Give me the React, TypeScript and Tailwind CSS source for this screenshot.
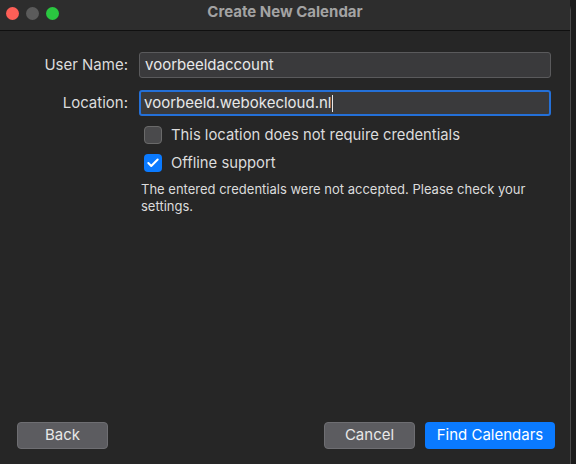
import { Check } from 'lucide-react'

const font = { fontFamily: 'Inter, "Noto Sans", sans-serif' }

function Field({ label, value, focused }: { label: string; value: string; focused?: boolean }) {
  return (
    <div className="flex items-center">
      <div className="w-[129px] pr-[1px] text-right text-[15px] text-[#dcdcdc]">{label}</div>
      <div
        className={
          focused
            ? 'ml-[10px] flex h-[26px] w-[412px] items-center rounded-[3px] border-[2.5px] border-[#2470d8] bg-[#3a3a3c] px-[3px] text-[15px] text-[#e8e8e8]'
            : 'ml-[10px] flex h-[26px] w-[412px] items-center rounded-[3px] border border-[#5a5a5c] bg-[#3a3a3c] px-[5px] text-[15px] text-[#e8e8e8]'
        }
      >
        {value}
        {focused && <span className="ml-[1px] h-[17px] w-[1px] bg-[#e8e8e8]" />}
      </div>
    </div>
  )
}

export default function App() {
  return (
    <div className="h-[464px] w-[576px] overflow-hidden bg-[#1c1c1c]" style={font}>
      <div className="flex h-[464px] w-[571px] flex-col rounded-tr-[10px] border-r border-[#4a4a4a] bg-[#262626]">
        {/* title bar */}
        <div className="relative flex h-[31px] shrink-0 items-center justify-center border-b border-[#101010] bg-[#2d2d2d]">
          <div className="absolute left-[6px] top-[7px] flex gap-[7px]">
            <span className="h-[13px] w-[13px] rounded-full bg-[#fd5f57]" />
            <span className="h-[13px] w-[13px] rounded-full bg-[#5b5b5b]" />
            <span className="h-[13px] w-[13px] rounded-full bg-[#2ac740]" />
          </div>
          <span className="-mt-[5px] text-[15px] font-bold text-[#a3a3a3]">Create New Calendar</span>
        </div>

        {/* form */}
        <div className="flex flex-1 flex-col pt-[21px]">
          <div className="flex flex-col gap-[12px]">
            <Field label="User Name:" value="voorbeeldaccount" />
            <Field label="Location:" value="voorbeeld.webokecloud.nl" focused />
          </div>

          <div className="ml-[144px] mt-[10px] flex flex-col gap-[10px] text-[14.8px] leading-[18px] text-[#dcdcdc]">
            <label className="flex items-center gap-[9px]">
              <span className="h-[18px] w-[18px] rounded-[4px] border border-[#6a6a6a] bg-[#4a4a4c]" />
              This location does not require credentials
            </label>
            <label className="flex items-center gap-[9px]">
              <span className="flex h-[18px] w-[18px] items-center justify-center rounded-[4px] bg-[#0a7aff]">
                <Check size={14} strokeWidth={3.5} color="#ffffff" />
              </span>
              Offline support
            </label>
          </div>

          <p className="ml-[141px] mt-[9px] w-[420px] text-[13px] leading-[17px] text-[#dcdcdc]">
            The entered credentials were not accepted. Please check your settings.
          </p>
        </div>

        {/* footer buttons */}
        <div className="flex items-center px-[17px] pb-[15px]">
          <button className="h-[27px] w-[91px] rounded-[4px] border border-[#6e6e72] bg-[#5c5c60] text-[15px] text-[#e8e8e8]">
            Back
          </button>
          <div className="flex-1" />
          <button className="h-[27px] w-[91px] rounded-[4px] border border-[#6e6e72] bg-[#5c5c60] text-[15px] text-[#e8e8e8]">
            Cancel
          </button>
          <button className="ml-[10px] mr-[-2px] h-[27px] w-[130px] rounded-[4px] bg-[#0a7aff] text-[15px] text-white">
            Find Calendars
          </button>
        </div>
      </div>
    </div>
  )
}
